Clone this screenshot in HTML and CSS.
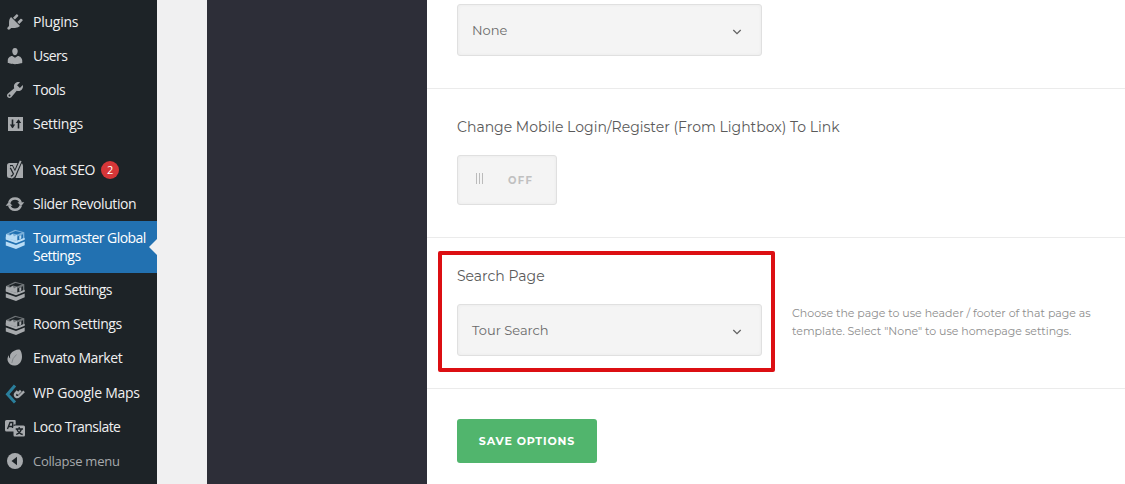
FILE: index.html
```html
<!DOCTYPE html>
<html lang="en">
<head>
<meta charset="utf-8">
<title>Tourmaster Global Settings</title>
<link rel="stylesheet" href="styles.css">
</head>
<body>
<svg class="defs" aria-hidden="true">
  <symbol id="box" viewBox="0 0 20 20">
    <path d="M1 5 10 .8 19.300 3.200v7.300L11 14 .8 10.500z" opacity=".6"/>
    <path class="cut" d="M3.500 4.900 10.500 2l6.500 1.500-5 2L8 4.500 6 6zM12.500 7.500l5.500-2.300v4.300l-5.500 2.300z"/>
    <path d="M1 5.200 5 6.800l2.500-2L9 7.500l3-1.800v6.300L.8 9zM14.300 6.900l2-.8v3.500l-2 .8z"/>
    <path class="cut" d="M.8 10.400 11 14l8.700-3.600v1.100L11 15.200.8 11.600z"/>
    <path d="m.8 8.500 10.200 3.600 8.700-3.300v2L11 14.200.8 10.600zM.8 12.600 11 16l8.700-3.400v3.600L11 20 .8 16.500z"/>
  </symbol>
</svg>
<div class="page">
  <nav class="menu">
    <a class="item"><svg class="icon" viewBox="0 0 20 20"><path d="M13.11 4.36 9.87 7.6 8 5.73l3.24-3.24c.35-.34 1.05-.2 1.56.32.52.51.66 1.21.31 1.55zm-8 1.77.91-1.12 9.01 9.01-1.19.84c-.71.71-2.63 1.16-3.82 1.16H6.14L4.9 17.26c-.59.59-1.54.59-2.12 0-.59-.58-.59-1.53 0-2.12l1.24-1.24v-3.88c0-1.13.4-3.19 1.09-3.89zm7.26 3.97 3.24-3.24c.34-.35 1.04-.21 1.55.31.52.51.66 1.21.31 1.55l-3.24 3.25z"/></svg><span class="label">Plugins</span></a>
    <a class="item"><svg class="icon" viewBox="0 0 20 20"><path d="M10 9.25c-2.27 0-2.73-3.44-2.73-3.44C7 4.02 7.82 2 9.97 2c2.16 0 2.98 2.02 2.71 3.81 0 0-.41 3.44-2.68 3.44zm0 2.57L12.72 10c2.39 0 4.52 2.33 4.52 4.53v2.49s-3.65 1.13-7.24 1.13c-3.65 0-7.24-1.13-7.24-1.13v-2.49c0-2.25 1.94-4.48 4.47-4.48z"/></svg><span class="label tight">Users</span></a>
    <a class="item"><svg class="icon" viewBox="0 0 20 20"><path d="M16.68 9.77c-1.34 1.34-3.3 1.67-4.95.99l-5.41 6.52c-.99.99-2.59.99-3.58 0s-.99-2.59 0-3.57l6.52-5.42c-.68-1.65-.35-3.61.99-4.95 1.28-1.28 3.12-1.62 4.72-1.06l-2.89 2.89 2.82 2.82 2.86-2.87c.53 1.58.18 3.39-1.08 4.65zM3.81 16.21c.4.39 1.04.39 1.43 0 .4-.4.4-1.04 0-1.43-.39-.4-1.03-.4-1.43 0-.39.39-.39 1.03 0 1.43z"/></svg><span class="label tight">Tools</span></a>
    <a class="item"><svg class="icon" viewBox="0 0 20 20"><path d="M3 3h15v14H3z"/><path class="line" d="M7.500 5.500v8M13.500 14.500v-8"/><path class="cut" d="M4.800 10.500h5.400l-2.700 3.700zM10.800 9h5.400l-2.700-3.700z"/></svg><span class="label">Settings</span></a>
    <a class="item after-gap"><svg class="icon" viewBox="0 0 20 20"><path d="M4.500 3H15.500q2.500.3 2.500 2.500V18H4.500Q2 18 2 15.500v-10Q2 3 4.500 3z"/><path class="line yoast-gap" d="M5 7h1.500L10 14 15.500 1M10.300 13Q9 17 6 17.500"/><path class="yoast-y" d="M5.300 7h1.400L10 13.500 15.700.8M10.300 13.500Q9 17 6.200 17.800"/></svg><span class="label mid">Yoast SEO</span><span class="badge">2</span></a>
    <a class="item"><svg class="icon" viewBox="0 0 20 20"><path class="ring" d="M4.300 8.600A6 6 0 0 1 15.700 8.600M15.700 11.600A6 6 0 0 1 4.300 11.600"/><path d="M12.500 8.300h6.800L16 12.200zM.7 11.800h6.800L4 7.800z"/></svg><span class="label mid">Slider Revolution</span></a>
    <a class="item active"><svg class="icon box" viewBox="0 0 20 20"><use href="#box"/></svg><span class="label tight">Tourmaster Global<br>Settings</span></a>
    <a class="item"><svg class="icon box" viewBox="0 0 20 20"><use href="#box"/></svg><span class="label tight">Tour Settings</span></a>
    <a class="item"><svg class="icon box" viewBox="0 0 20 20"><use href="#box"/></svg><span class="label mid">Room Settings</span></a>
    <a class="item"><svg class="icon" viewBox="0 0 20 20"><path d="M14.500 1.500c-2-.5-7 1-9 4.500-.5 1-.6 2.500-.3 4.500C3.800 9.500 3.800 8 4 7c-1.500 2-2 4.500-1 6.500 1.500 3.500 5 4.800 8.500 3.700 4-1.200 5.500-5 5.500-8.700 0-3-1-6.300-2.500-7z"/><path class="thin" d="M11.500 6.500q-4.500 4-4.700 8.500"/></svg><span class="label mid">Envato Market</span></a>
    <a class="item"><svg class="icon low" viewBox="0 0 20 20"><path class="teal" d="M10 1.500 2.500 10.300l7.500 8.200"/><path class="ring mark" d="m12.500 7-2 2.200q-1.400 1.800.2 3.400 1.700 1.300 3.400-.4l5-4.800M12.300 10.300l3.500-3.700"/></svg><span class="label">WP Google Maps</span></a>
    <a class="item"><svg class="icon low" viewBox="0 0 20 20"><path d="M1.500 2h8.200q1 0 1 1v3.500H8.500v7h-7q-1.500 0-1.500-1.500V3.500Q0 2 1.500 2zM10.200 7.500h8.300q1.500 0 1.500 1.500v8q0 1.500-1.500 1.500h-9Q8.500 18.500 8.500 17V9q0-1.500 1.700-1.500z"/><path class="fine" d="M2.500 11 5 4.500h2.800L7.500 10M3.500 8.500H8M10.700 11h7.300M14.200 9v2M16.500 11q-1.300 4-5.300 5.500M12 11.500q1.700 4 5.700 5"/></svg><span class="label tight">Loco Translate</span></a>
    <a class="item collapse"><svg class="icon" viewBox="0 0 20 20"><circle cx="10" cy="10" r="8"/><path class="cut" d="M12 5.800v8.400L6.500 10z"/></svg><span class="label">Collapse menu</span></a>
  </nav>
  <div class="gutter"></div>
  <aside class="tabs"></aside>
  <main class="options">
    <section class="row first">
      <div class="select"><span>None</span><svg class="chev" viewBox="0 0 10 10"><path d="m1.300 3 3.700 3.700L8.700 3"/></svg></div>
    </section>
    <section class="row toggle-row">
      <h3 class="title">Change Mobile Login/Register (From Lightbox) To Link</h3>
      <div class="toggle"><span class="grip"></span><span class="state">OFF</span></div>
    </section>
    <section class="row search-row">
      <div class="field">
        <h3 class="title">Search Page</h3>
        <div class="select"><span>Tour Search</span><svg class="chev" viewBox="0 0 10 10"><path d="m1.300 3 3.700 3.700L8.700 3"/></svg></div>
        <div class="highlight"></div>
      </div>
      <p class="hint">Choose the page to use header / footer of that page as<br>template. Select "None" to use homepage settings.</p>
    </section>
    <section class="actions"><button class="save">SAVE OPTIONS</button></section>
  </main>
</div>
</body>
</html>
```

FILE: styles.css
```css
* { box-sizing: border-box; }
body { margin: 0; background: #fff; overflow: hidden; }
.defs { position: absolute; width: 0; height: 0; }
.page { display: flex; width: 1125px; height: 484px; overflow: hidden; }

.menu {
  --bg: #1d2327;
  width: 157px;
  flex: none;
  padding-top: 4.4px;
  background: var(--bg);
  color: #f0f0f1;
  font: 14px/18.3px "Segoe UI", "Open Sans", "Noto Sans", sans-serif;
}
.item { display: flex; position: relative; height: 34.2px; padding: 8.400px 0 0 5px; white-space: nowrap; }
.after-gap { margin-top: 11.2px; }
.icon { width: 20px; height: 20px; flex: none; margin-right: 8px; margin-top: -1px; fill: #a7aaad; overflow: visible; }
.box { margin-top: 0; }
.low { margin-top: 0; }
.label { letter-spacing: -0.25px; }
.mid { letter-spacing: -0.4px; }
.tight { letter-spacing: -0.55px; }
.cut { fill: var(--bg); }
.line { fill: none; stroke: var(--bg); stroke-width: 1.6; }
.yoast-gap { stroke-width: 4; }
.yoast-y { fill: none; stroke: #a7aaad; stroke-width: 1.9; }
.ring { fill: none; stroke: #a7aaad; stroke-width: 2.6; }
.mark { stroke-width: 2.3; }
.thin { fill: none; stroke: #777d82; stroke-width: .8; }
.fine { fill: none; stroke: var(--bg); stroke-width: 1.3; }
.teal { fill: none; stroke: #2a7f9c; stroke-width: 3; }
.active { --bg: #2271b1; height: 52px; background: var(--bg); color: #fff; }
.active .icon { fill: #b9dcf5; }
.active::after {
  content: "";
  position: absolute;
  right: 0;
  top: 18px;
  border: 8px solid transparent;
  border-left: 0;
  border-right-color: #f0f0f1;
}
.collapse { color: #a7aaad; font-size: 13px; }
.badge {
  width: 18px;
  height: 18px;
  margin: 0 0 0 6px;
  border-radius: 9px;
  background: #d63638;
  color: #fff;
  font-size: 11px;
  line-height: 18px;
  text-align: center;
}

.gutter { width: 50px; flex: none; background: #f0f0f1; }
.tabs { width: 220px; flex: none; background: #2d2e38; }

.options { flex: 1; font-family: Montserrat, Inter, "Open Sans", sans-serif; color: #6a6a6a; }
.row { border-bottom: 1px solid #ebebeb; padding-left: 30px; }
.first { height: 89px; padding-top: 4px; }
.toggle-row { height: 149px; padding-top: 28px; }
.search-row { display: flex; height: 151px; padding-top: 28px; }
.title { margin: 0 0 17px; font-size: 14px; line-height: 21px; font-weight: 400; color: #5a5a5a; white-space: nowrap; }
.select {
  display: flex;
  align-items: center;
  justify-content: space-between;
  width: 305px;
  height: 52px;
  padding: 0 19.500px 0 14px;
  border: 1px solid #e0e0e0;
  border-radius: 3px;
  background: #f4f4f4;
  box-shadow: inset 0 0 3px #e8e8e8;
  font-size: 13px;
}
.chev { width: 10px; height: 10px; margin-top: 4px; fill: none; stroke: #636363; stroke-width: 1.3; }
.toggle {
  display: flex;
  align-items: center;
  width: 100px;
  height: 50px;
  border: 1px solid #e0e0e0;
  border-radius: 3px;
  background: #f4f4f4;
  box-shadow: inset 0 0 3px #e8e8e8;
}
.grip { width: 7px; height: 11px; margin: -3px 25px 0 18px; background: repeating-linear-gradient(90deg, #bbb 0 1px, transparent 1px 3px); }
.state { font-size: 10px; font-weight: 700; letter-spacing: 1.3px; color: #c0c0c0; }
.field { position: relative; width: 305px; flex: none; }
.highlight { position: absolute; left: -19px; top: -15px; width: 337px; height: 121px; border: 4px solid #dc0f13; border-radius: 2px; }
.hint { margin: 38px 0 0 30px; font-size: 11px; line-height: 18px; font-weight: 400; color: #8d8d8d; white-space: nowrap; }
.actions { padding: 30px 0 0 30px; }
.save {
  width: 140px;
  height: 44px;
  padding: 0;
  border: 0;
  border-radius: 3px;
  background: #51b56d;
  color: #fff;
  font: 700 11px/44px Montserrat, Inter, "Open Sans", sans-serif;
  letter-spacing: .85px;
}
```
